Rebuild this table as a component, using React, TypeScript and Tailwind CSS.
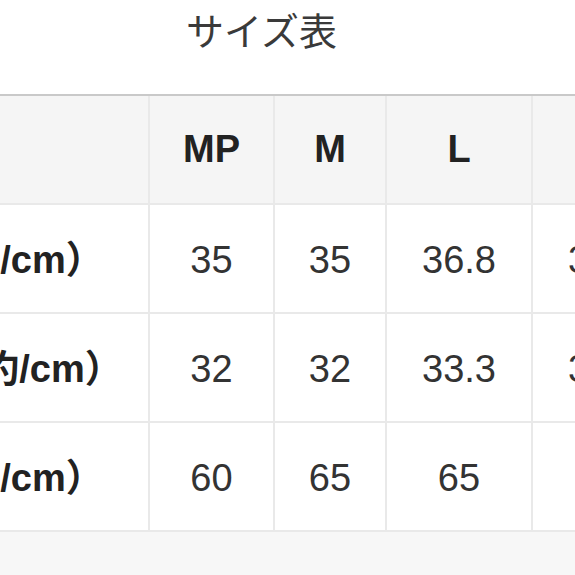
import React from "react";

const cols = ["w-[308px]", "w-[125px]", "w-[112px]", "w-[146px]", "w-[146px]"];

const header = ["", "MP", "M", "L", "LL"];
const rows: string[][] = [
  ["肩幅（/cm）", "35", "35", "36.8", "38.6"],
  ["身幅（約/cm）", "32", "32", "33.3", "34.8"],
  ["着丈（/cm）", "60", "65", "65", "70"],
];

function Row({ cells, head }: { cells: string[]; head?: boolean }) {
  return (
    <div className={`flex h-[109px] border-b-2 border-[#e9e9e9] ${head ? "bg-[#f5f5f5]" : "bg-white"}`}>
      {cells.map((c, i) => (
        <div
          key={i}
          className={`${cols[i]} shrink-0 flex items-center justify-center border-r-2 border-[#e9e9e9] whitespace-nowrap ${
            head ? "" : "pt-[4px]"
          } ${head || i === 0 ? "font-bold text-[#222]" : "font-normal text-[#333]"} text-[38px]`}
        >
          {c}
        </div>
      ))}
    </div>
  );
}

export default function App() {
  return (
    <div
      className="w-[575px] h-[575px] overflow-hidden bg-white flex flex-col"
      style={{ fontFamily: '"Liberation Sans", "Noto Sans CJK JP", sans-serif' }}
    >
      <div className="h-[64px] flex items-center justify-center pr-[52px] text-[38px] text-[#3a3a3a] font-normal leading-none shrink-0">
        サイズ表
      </div>
      <div className="h-[30px] shrink-0" />
      <div className="border-t-2 border-[#c9c9c9] shrink-0 overflow-hidden">
        <div className="ml-[-158px] w-[900px]">
          <Row cells={header} head />
          {rows.map((r, i) => (
            <Row key={i} cells={r} />
          ))}
        </div>
      </div>
      <div className="flex-1 bg-[#f7f7f7]" />
    </div>
  );
}
